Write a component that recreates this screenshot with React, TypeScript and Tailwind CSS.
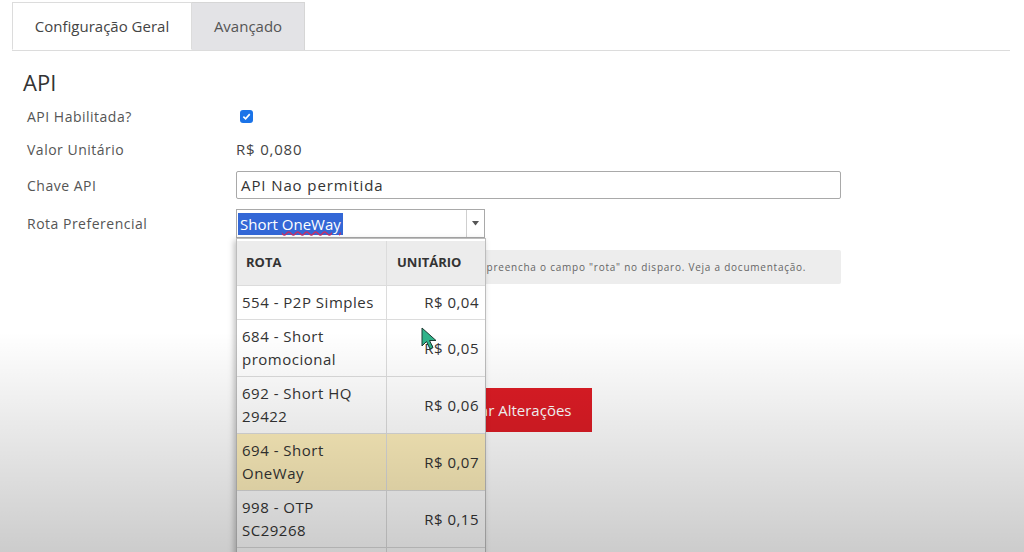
const rotas = [
  { nome: "554 - P2P Simples", valor: "R$ 0,04" },
  { nome: "684 - Short promocional", valor: "R$ 0,05" },
  { nome: "692 - Short HQ 29422", valor: "R$ 0,06" },
  { nome: "694 - Short OneWay", valor: "R$ 0,07", ativo: true },
  { nome: "998 - OTP SC29268", valor: "R$ 0,15" },
  { nome: "999 - Long Code", valor: "R$ 0,20" },
];

export default function App() {
  return (
    <div className="relative w-[1024px] h-[552px] overflow-hidden bg-white text-[#444] font-['Open_Sans',sans-serif]">
      {/* abas */}
      <div className="ml-3 mr-[14px] pt-[2px] flex border-b border-[#dcdcdc]">
        <div className="w-[180px] h-[48px] -mb-px flex items-center justify-center bg-white border border-[#dcdcdc] border-b-white text-[15px] text-[#444]">
          Configuração Geral
        </div>
        <div className="w-[113px] h-[48px] flex items-center justify-center bg-[#e3e3e6] border-t border-r border-[#d6d6d6] text-[15px] text-[#555]">
          Avançado
        </div>
      </div>

      <div className="pl-[23px]">
        <h2 className="mt-[18px] text-[22px] leading-[27px] text-[#333]">API</h2>

        <div className="mt-[4px] grid grid-cols-[213px_1fr] text-[14px] tracking-[0.5px] text-[#555]">
          <div className="h-[33px] pl-1 flex items-center">API Habilitada?</div>
          <div className="h-[33px] flex items-center pl-[4px]">
            <span className="w-[13px] h-[13px] rounded-[3px] bg-[#1a73e8] flex items-center justify-center">
              <svg width="9" height="9" viewBox="0 0 10 10">
                <path d="M1.5 5.2 L4 7.6 L8.6 2.4" stroke="white" strokeWidth="1.8" fill="none" />
              </svg>
            </span>
          </div>

          <div className="h-[33px] pl-1 flex items-center">Valor Unitário</div>
          <div className="h-[33px] flex items-center text-[15px] tracking-[0.8px] text-[#444]">R$ 0,080</div>

          <div className="h-[38px] pl-1 flex items-center">Chave API</div>
          <div className="h-[38px] flex items-center">
            <div className="w-[605px] h-[28px] border border-[#a9a9a9] rounded-[2px] flex items-center px-[4px] text-[15px] tracking-[0.9px] text-[#333]">
              API Nao permitida
            </div>
          </div>

          <div className="h-[39px] pl-1 flex items-center">Rota Preferencial</div>
          <div className="h-[39px] flex items-center">
            <div className="w-[249px] h-[29px] border border-[#a9a9a9] flex items-stretch text-[15px] tracking-normal">
              <div className="flex-1 flex items-center pl-[1px]">
                <span className="bg-[#3367d6] text-white px-[2px] leading-[22px]">
                  Short <span className="underline decoration-wavy decoration-[#c0306a] underline-offset-[1px]">OneWay</span>
                </span>
              </div>
              <div className="w-[18px] border-l border-[#cfcfcf] flex items-center justify-center">
                <svg width="7" height="5" viewBox="0 0 7 5">
                  <path d="M0 0 H7 L3.5 4.5 Z" fill="#555" />
                </svg>
              </div>
            </div>
          </div>

          <div />
          <div className="mt-[7px] w-[605px] h-[34px] bg-[#ededed] rounded-[2px] flex items-center pl-[16px] text-[10px] tracking-[0.76px] text-[#666]">
            Para usar uma rota diferente no seu envio, preencha o campo "rota" no disparo. Veja a documentação.
          </div>

          <div />
          <div className="mt-[104px] pl-[196px]">
            <button className="h-[44px] px-[20px] bg-[#dd1c25] text-white text-[15px] tracking-normal">
              Salvar Alterações
            </button>
          </div>
        </div>
      </div>

      {/* lista aberta do select */}
      <div className="absolute left-[236px] top-[238px] w-[250px] bg-white border border-[#bdbdbd] shadow-[-2px_2px_6px_rgba(0,0,0,0.25)]">
        <div className="grid grid-cols-[150px_1fr] mt-[2px] bg-[#ececec] h-[45px] text-[13px] font-bold text-[#333] border-b border-[#dcdcdc]">
          <div className="flex items-center pl-[9px] border-r border-[#dcdcdc]">ROTA</div>
          <div className="flex items-center pl-[10px]">UNITÁRIO</div>
        </div>
        {rotas.map((r) => (
          <div
            key={r.nome}
            className={`grid grid-cols-[150px_1fr] border-b border-[#dcdcdc] text-[15px] tracking-[0.5px] text-[#333] ${r.ativo ? "bg-[#fff0bd]" : "bg-white"}`}
          >
            <div className="py-[5px] pl-[5px] pr-2 leading-[23px] border-r border-[#dcdcdc]">{r.nome}</div>
            <div className="flex items-center justify-end pr-[6px]">{r.valor}</div>
          </div>
        ))}
      </div>

      {/* cursor */}
      <svg className="absolute left-[421px] top-[327px]" width="18" height="24" viewBox="0 0 18 24">
        <path d="M1 1 L1 19 L5.5 14.5 L9 22 L12 20.5 L8.5 13.5 L15 13.5 Z" fill="#2fb38a" stroke="#1d3b33" strokeWidth="1" />
      </svg>

      {/* escurecimento do vídeo */}
      <div className="pointer-events-none absolute inset-x-0 bottom-0 h-[220px] bg-linear-to-b from-transparent to-black/20" />
    </div>
  );
}
